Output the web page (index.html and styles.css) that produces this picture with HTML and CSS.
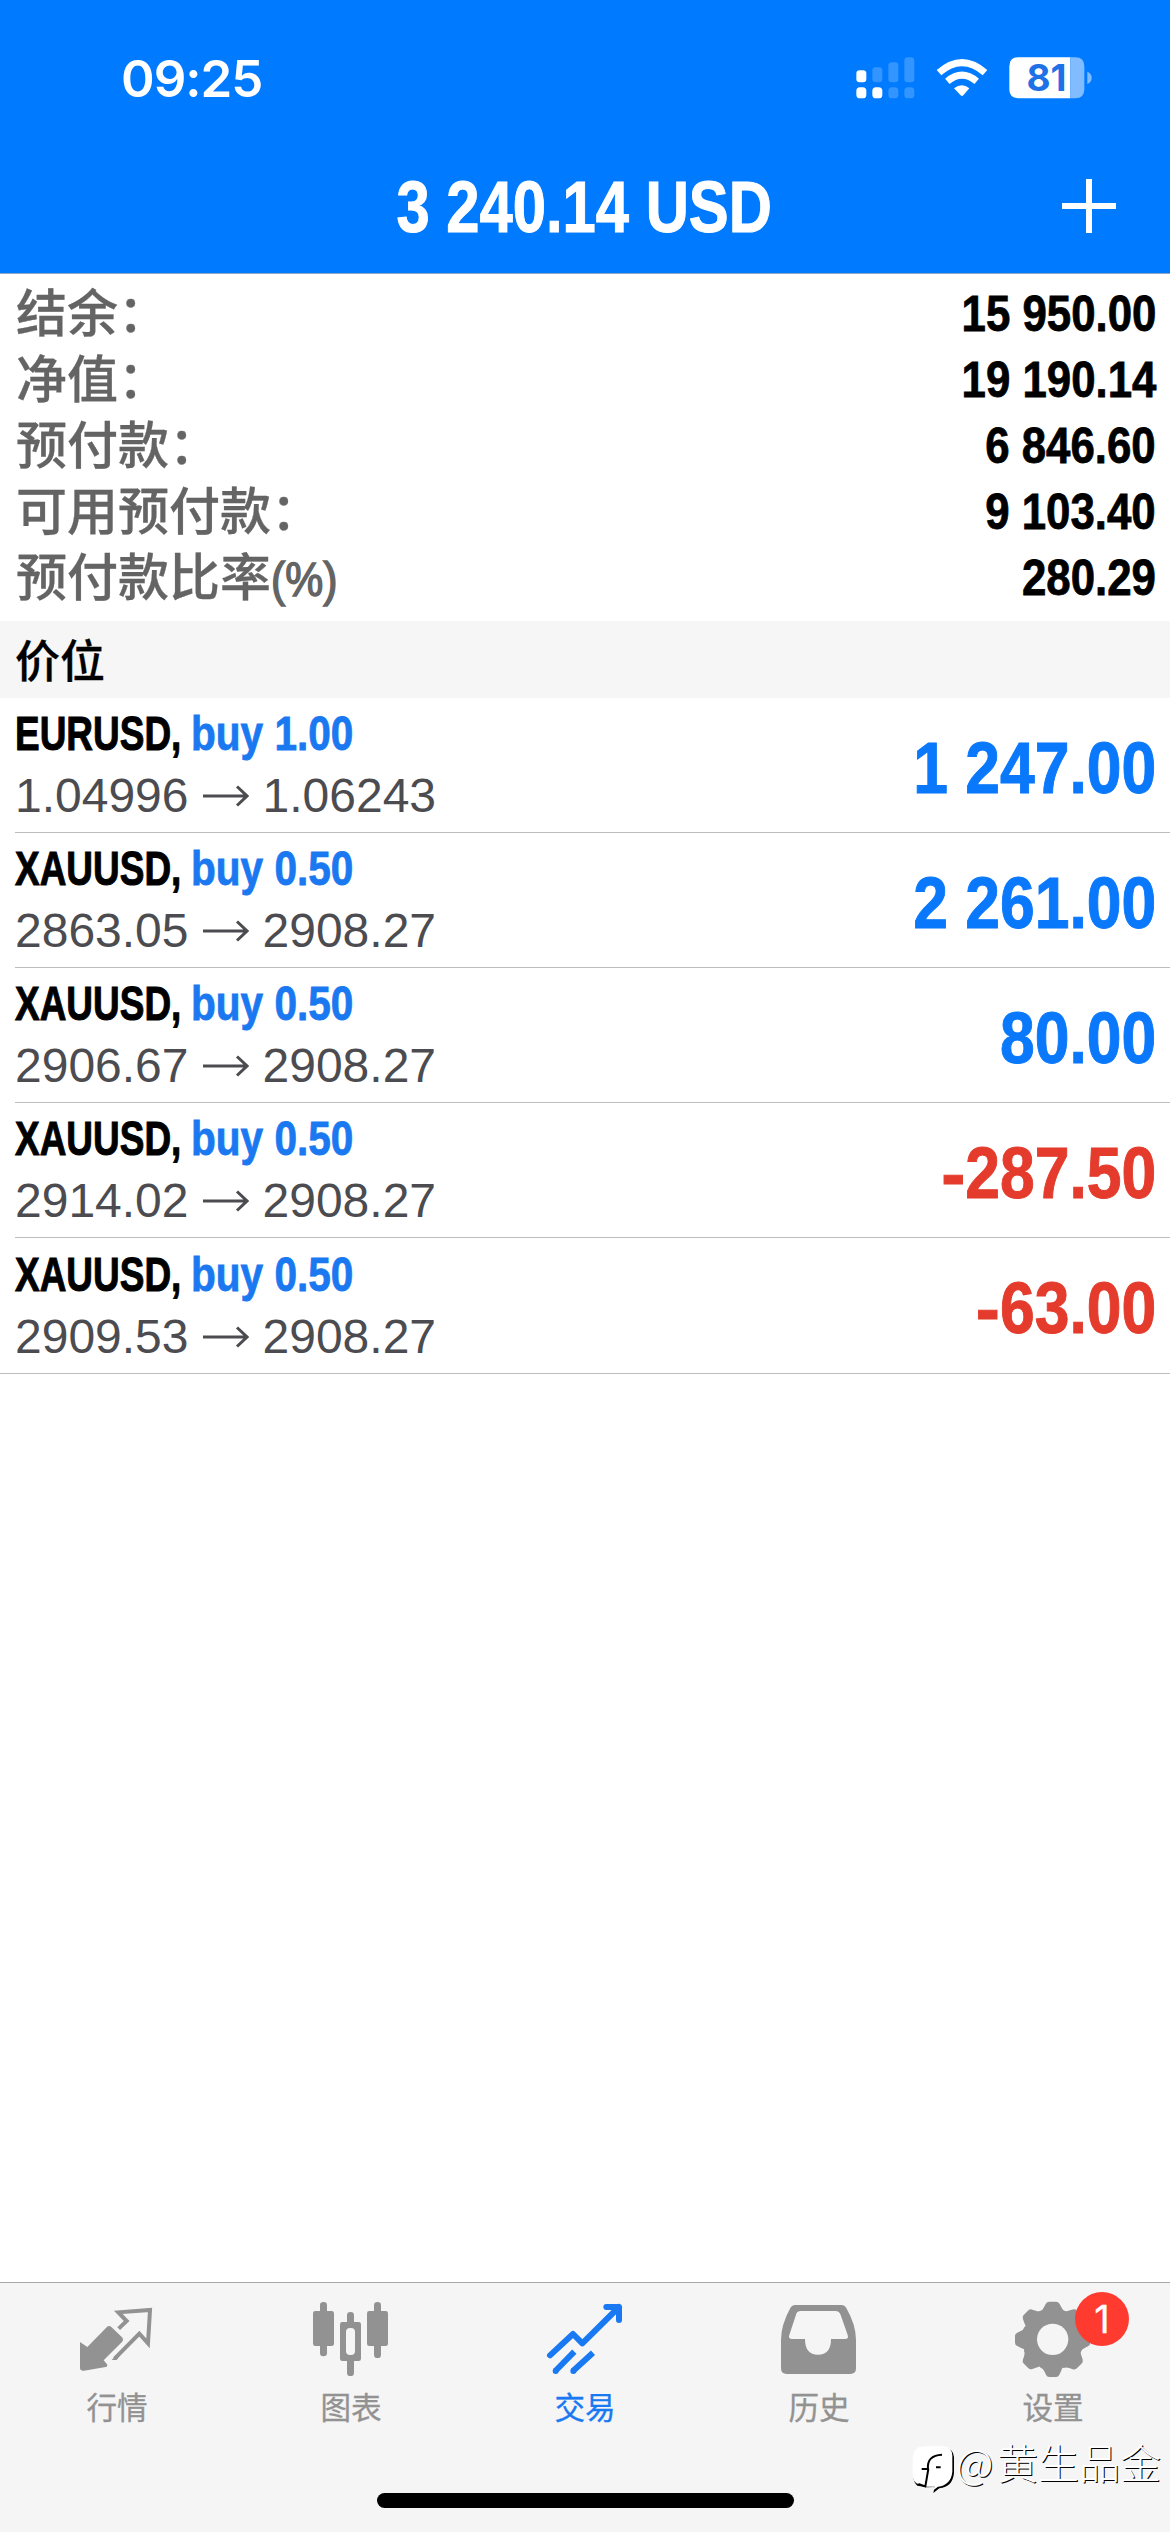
FILE: index.html
```html
<!DOCTYPE html>
<html lang="zh-CN">
<head>
<meta charset="utf-8">
<title>交易</title>
<link rel="stylesheet" href="styles.css">
</head>
<body>
<div class="screen">
  <header class="header">
    <div class="status">
      <span class="time">09:25</span>
      <div class="status-icons">
        <svg class="signal" width="59" height="42" viewBox="227 80 177 126" fill="#fff">
          <rect x="228" y="120" width="30" height="36" rx="10"/>
          <rect x="228" y="171" width="30" height="33" rx="11"/>
          <rect x="276" y="171" width="30" height="33" rx="11"/>
          <g opacity=".2">
            <rect x="276" y="111" width="30" height="45" rx="10"/>
            <rect x="324" y="96" width="30" height="60" rx="10"/>
            <rect x="372" y="81" width="30" height="75" rx="10"/>
            <rect x="324" y="171" width="30" height="33" rx="11"/>
            <rect x="372" y="171" width="30" height="33" rx="11"/>
          </g>
        </svg>
        <svg class="wifi" width="52" height="42" viewBox="467 80 156 126">
          <path d="M476 127Q545 67 614 127M501 153Q545 116 589 153" fill="none" stroke="#fff" stroke-width="21"/>
          <path d="M521 174Q545 156 567 174L549 195Q545 199 541 195Z" fill="#fff"/>
        </svg>
        <div class="battery">
          <svg width="84" height="42" viewBox="686 80 252 126">
            <path d="M714 81H870V204H714Q687 204 687 177V108Q687 81 714 81Z" fill="#fff"/>
            <path d="M870 81H885Q912 81 912 108V177Q912 204 885 204H870Z" fill="#80bcff"/>
            <path d="M921 124Q934 129 934 142.500Q934 156 921 161Z" fill="#80bcff"/>
          </svg>
          <span class="battery-level">81</span>
        </div>
      </div>
    </div>
    <div class="navbar">
      <h1 class="title">3 240.14 USD</h1>
      <svg class="add" width="54" height="54" viewBox="0 0 54 54"><path d="M27 0V54M0 27H54" stroke="#fff" stroke-width="6"/></svg>
    </div>
  </header>

  <section class="summary">
    <div class="stat"><span class="label">结余：</span><span class="amount">15 950.00</span></div>
    <div class="stat"><span class="label">净值：</span><span class="amount">19 190.14</span></div>
    <div class="stat"><span class="label">预付款：</span><span class="amount">6 846.60</span></div>
    <div class="stat"><span class="label">可用预付款：</span><span class="amount">9 103.40</span></div>
    <div class="stat"><span class="label">预付款比率<span class="percent">(%)</span></span><span class="amount">280.29</span></div>
  </section>

  <h2 class="section-title">价位</h2>

  <main class="positions">
    <div class="position">
      <div class="info">
        <div class="deal"><span class="symbol">EURUSD,</span><span class="side">buy 1.00</span></div>
        <div class="quote"><span>1.04996</span><svg class="arrow" width="46" height="22" viewBox="0 0 46 22"><path d="M0 11H44M34 1.500L44 11L34 20.500"/></svg><span>1.06243</span></div>
      </div>
      <span class="profit">1 247.00</span>
    </div>
    <div class="position">
      <div class="info">
        <div class="deal"><span class="symbol">XAUUSD,</span><span class="side">buy 0.50</span></div>
        <div class="quote"><span>2863.05</span><svg class="arrow" width="46" height="22" viewBox="0 0 46 22"><path d="M0 11H44M34 1.500L44 11L34 20.500"/></svg><span>2908.27</span></div>
      </div>
      <span class="profit">2 261.00</span>
    </div>
    <div class="position">
      <div class="info">
        <div class="deal"><span class="symbol">XAUUSD,</span><span class="side">buy 0.50</span></div>
        <div class="quote"><span>2906.67</span><svg class="arrow" width="46" height="22" viewBox="0 0 46 22"><path d="M0 11H44M34 1.500L44 11L34 20.500"/></svg><span>2908.27</span></div>
      </div>
      <span class="profit">80.00</span>
    </div>
    <div class="position">
      <div class="info">
        <div class="deal"><span class="symbol">XAUUSD,</span><span class="side">buy 0.50</span></div>
        <div class="quote"><span>2914.02</span><svg class="arrow" width="46" height="22" viewBox="0 0 46 22"><path d="M0 11H44M34 1.500L44 11L34 20.500"/></svg><span>2908.27</span></div>
      </div>
      <span class="profit loss"><span class="minus">-</span>287.50</span>
    </div>
    <div class="position last">
      <div class="info">
        <div class="deal"><span class="symbol">XAUUSD,</span><span class="side">buy 0.50</span></div>
        <div class="quote"><span>2909.53</span><svg class="arrow" width="46" height="22" viewBox="0 0 46 22"><path d="M0 11H44M34 1.500L44 11L34 20.500"/></svg><span>2908.27</span></div>
      </div>
      <span class="profit loss"><span class="minus">-</span>63.00</span>
    </div>
  </main>

  <footer class="footer">
    <nav class="tabs">
      <div class="tab">
        <svg width="234" height="100" viewBox="0 72 702 300">
          <path d="M240 246L262 261L320 202Q327 195 334 201L366 232Q372 239 366 246L311 301L321 313Q324 320 317 321L252 332Q240 333 240 324Z" fill="#929292"/>
          <path d="M356 206L380 183L355 157L450 150L444 250L418 221L344 296" fill="none" stroke="#929292" stroke-width="12"/>
          <path d="M335 300L348 286L356 293L349 300Z" fill="#929292"/>
        </svg>
        <span>行情</span>
      </div>
      <div class="tab">
        <svg width="234" height="100" viewBox="702 72 702 300" fill="#929292">
          <rect x="960" y="126" width="21" height="163" rx="10"/><rect x="939" y="153" width="63" height="105" rx="7"/>
          <rect x="1122" y="126" width="21" height="168" rx="10"/><rect x="1101" y="153" width="63" height="105" rx="7"/>
          <rect x="1041" y="156" width="21" height="192" rx="10"/><rect x="1020" y="186" width="63" height="117" rx="7"/>
          <rect x="1038" y="204" width="27" height="81" rx="12" fill="#f5f5f5"/>
        </svg>
        <span>图表</span>
      </div>
      <div class="tab active">
        <svg width="234" height="100" viewBox="-36 72 702 300" fill="none" stroke="#1879f2" stroke-width="18">
          <path d="M210 286L279 222L307 250L417 141M379 141H417V180" stroke-linecap="round" stroke-linejoin="round"/>
          <path d="M283 275L226 333M339 278L279 333"/>
          <circle cx="227" cy="333" r="9" fill="#1879f2" stroke="none"/><circle cx="280" cy="333" r="9" fill="#1879f2" stroke="none"/>
        </svg>
        <span>交易</span>
      </div>
      <div class="tab">
        <svg width="234" height="100" viewBox="666 72 702 300">
          <path fill-rule="evenodd" d="M946 135H1084Q1094 135 1099 144Q1128 195 1128 240V325Q1128 342 1111 342H920Q903 342 903 325V240Q903 195 931 144Q936 135 946 135ZM962 153Q952 153 949 161L928 225Q924 237 936 237H975Q975 284 1014 284Q1053 284 1053 237H1095Q1107 237 1103 225L1082 165Q1078 153 1066 153Z" fill="#929292"/>
        </svg>
        <span>历史</span>
      </div>
      <div class="tab">
        <svg width="234" height="100" viewBox="168 72 702 300">
          <g transform="translate(518 238)">
            <g fill="#929292">
              <circle r="91"/>
              <path id="tooth" d="M-38 -84Q-30 -86 -26 -96L-21 -106Q-17 -113 -10 -113H10Q17 -113 21 -106L26 -96Q30 -86 38 -84L30 84Q28 88 25 96L20 106Q17 113 10 113H-10Q-17 113 -20 106L-25 96Q-28 88 -38 84Z"/>
              <use href="#tooth" transform="rotate(45)"/><use href="#tooth" transform="rotate(90)"/><use href="#tooth" transform="rotate(135)"/>
            </g>
            <circle r="47" fill="#f5f5f5"/>
          </g>
        </svg>
        <span>设置</span>
        <b class="badge">1</b>
      </div>
    </nav>
    <div class="home-bar"></div>
    <div class="watermark">
      <svg width="44" height="50" viewBox="82 556 132 150">
        <path d="M120 564H180Q206 566 208 592V640Q204 682 164 686L146 700L150 682L128 683L98 678Q86 668 86 650V600Q88 566 120 564Z" fill="#000"/>
        <path d="M116 560H176Q202 562 203 588V636Q199 676 160 681L146 692L150 681H126L102 674Q84 668 84 646V596Q86 562 116 560Z" fill="#fff"/>
        <path d="M111 628H130Q126 587 172 585M131 628L122 680L101 673M154 623H168" fill="none" stroke="#000" stroke-width="6"/>
      </svg>
      <span class="at">@</span><span>黄生品金</span>
    </div>
  </footer>
</div>
</body>
</html>
```
FILE: styles.css
```css
* { box-sizing: border-box; margin: 0; padding: 0; }

body {
  background: #fff;
  font-family: "Liberation Sans", "Noto Sans CJK SC", sans-serif;
}

svg { display: block; flex: none; }

.screen {
  width: 1170px;
  height: 2532px;
  display: flex;
  flex-direction: column;
  overflow: hidden;
}

.header {
  height: 274px;
  background: #007aff;
  border-bottom: 1px solid #8ea8c4;
  color: #fff;
}

.status {
  height: 138px;
  padding: 57px 77px 0 121px;
  display: flex;
  justify-content: space-between;
}

.time {
  font: 600 51px/44px Inter, sans-serif;
  letter-spacing: -1px;
}

.status-icons { display: flex; }
.wifi { margin-left: 21px; }
.battery { margin-left: 21px; position: relative; }

.battery-level {
  position: absolute;
  left: 0;
  top: 0;
  width: 75px;
  text-align: center;
  font: 700 37px/42px Inter, sans-serif;
  color: #1f72e6;
}

.navbar {
  height: 135px;
  display: grid;
  grid-template-columns: 1fr 400px 1fr;
  align-items: center;
  padding: 0 54px;
}

.title {
  grid-column: 2;
  display: flex;
  justify-content: center;
  white-space: nowrap;
  font-size: 72px;
  line-height: 72px;
  padding: 3px 2px 0 0;
  transform: scaleX(0.83);
  -webkit-text-stroke: 1px #fff;
}

.add { justify-self: end; }

.summary {
  height: 347px;
  padding: 7px 14px 0 16px;
}

.stat {
  height: 66px;
  display: flex;
  justify-content: space-between;
}

.label {
  font-weight: 500;
  font-size: 51px;
  line-height: 67px;
  color: #646464;
  white-space: nowrap;
  -webkit-text-stroke: 0.3px #646464;
}

.percent {
  display: inline-block;
  font-size: 48px;
  transform: scaleX(0.89);
  transform-origin: left;
  -webkit-text-stroke: 1.5px #646464;
}

.amount {
  font-weight: 700;
  font-size: 50px;
  line-height: 66px;
  transform: scaleX(0.876);
  transform-origin: right;
  -webkit-text-stroke: 0.8px #000;
}

.section-title {
  height: 77px;
  padding-left: 15px;
  background: #f6f6f6;
  font: 500 45px/75px "Noto Sans CJK SC", sans-serif;
  -webkit-text-stroke: 0.3px #000;
}

.positions { flex: 1; }

.position {
  height: 135px;
  margin-left: 15px;
  padding-right: 14px;
  border-bottom: 1px solid #bdbdbf;
  display: flex;
  justify-content: space-between;
  align-items: center;
}

.position.last { height: 136px; margin-left: 0; padding-left: 15px; }

.deal {
  display: flex;
  height: 62px;
  font-weight: 700;
  font-size: 48px;
  line-height: 62px;
  white-space: nowrap;
}

.symbol {
  width: 176px;
  transform: scaleX(0.77);
  transform-origin: left;
  -webkit-text-stroke: 1px #000;
}

.side {
  color: #1a78f0;
  transform: scaleX(0.845);
  transform-origin: left;
  -webkit-text-stroke: 0.8px #1a78f0;
}

.quote {
  display: flex;
  align-items: center;
  font-size: 48px;
  line-height: 62px;
  color: #4c4c50;
}

.arrow { margin: 0 14px; fill: none; stroke: #4c4c50; stroke-width: 3; }

.profit {
  font-weight: 700;
  font-size: 72px;
  line-height: 80px;
  padding-top: 5px;
  color: #0a78fb;
  transform: scaleX(0.867);
  transform-origin: right;
  -webkit-text-stroke: 1px currentColor;
}

.profit.loss { color: #e43b2c; }

.minus {
  display: inline-block;
  transform: scaleX(1.16);
  transform-origin: right;
}

.footer {
  position: relative;
  height: 250px;
  background: #f5f5f5;
  border-top: 1px solid #a8a8a8;
}

.tabs {
  display: grid;
  grid-template-columns: repeat(5, 1fr);
  padding-top: 1px;
}

.tab {
  position: relative;
  display: flex;
  flex-direction: column;
  align-items: center;
  font: 400 30.6px/44px "Noto Sans CJK SC", sans-serif;
  color: #929292;
  -webkit-text-stroke: 0.3px currentColor;
}

.tab.active { color: #1879f2; }

.badge {
  position: absolute;
  left: 139px;
  top: 8px;
  width: 54px;
  height: 54px;
  border-radius: 50%;
  background: #ff3b30;
  color: #fff;
  font: 400 38px/54px Inter, sans-serif;
  text-align: center;
}

.home-bar {
  width: 417px;
  height: 15px;
  margin: 65px auto 0;
  border-radius: 8px;
  background: #000;
}

.watermark {
  position: absolute;
  right: 9px;
  top: 162px;
  display: flex;
  color: #fff;
  font: 300 41px/33px "Noto Sans CJK SC", sans-serif;
  text-shadow: 1px 1px 0.5px #000;
}

.at { width: 41px; }
```
